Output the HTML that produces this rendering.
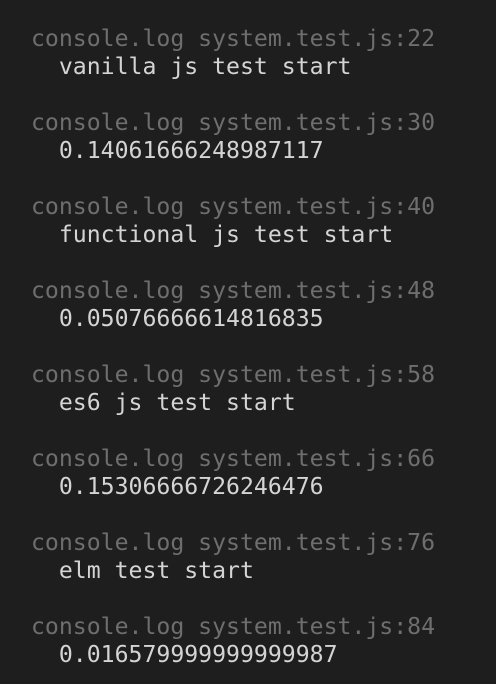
<!DOCTYPE html>
<html><head><style>
html,body{margin:0;padding:0;background:#1e1e1e;width:496px;height:684px;overflow:hidden}
pre{margin:0;position:absolute;left:31px;top:25px;font-family:"DejaVu Sans Mono","Liberation Mono",monospace;font-size:23.15px;line-height:28px;color:#d4d4d4}
.g{color:#6e6e6e}
</style></head><body>
<pre><span class="g">console.log system.test.js:22</span>
  vanilla js test start

<span class="g">console.log system.test.js:30</span>
  0.14061666248987117

<span class="g">console.log system.test.js:40</span>
  functional js test start

<span class="g">console.log system.test.js:48</span>
  0.05076666614816835

<span class="g">console.log system.test.js:58</span>
  es6 js test start

<span class="g">console.log system.test.js:66</span>
  0.15306666726246476

<span class="g">console.log system.test.js:76</span>
  elm test start

<span class="g">console.log system.test.js:84</span>
  0.016579999999999987</pre>
</body></html>
